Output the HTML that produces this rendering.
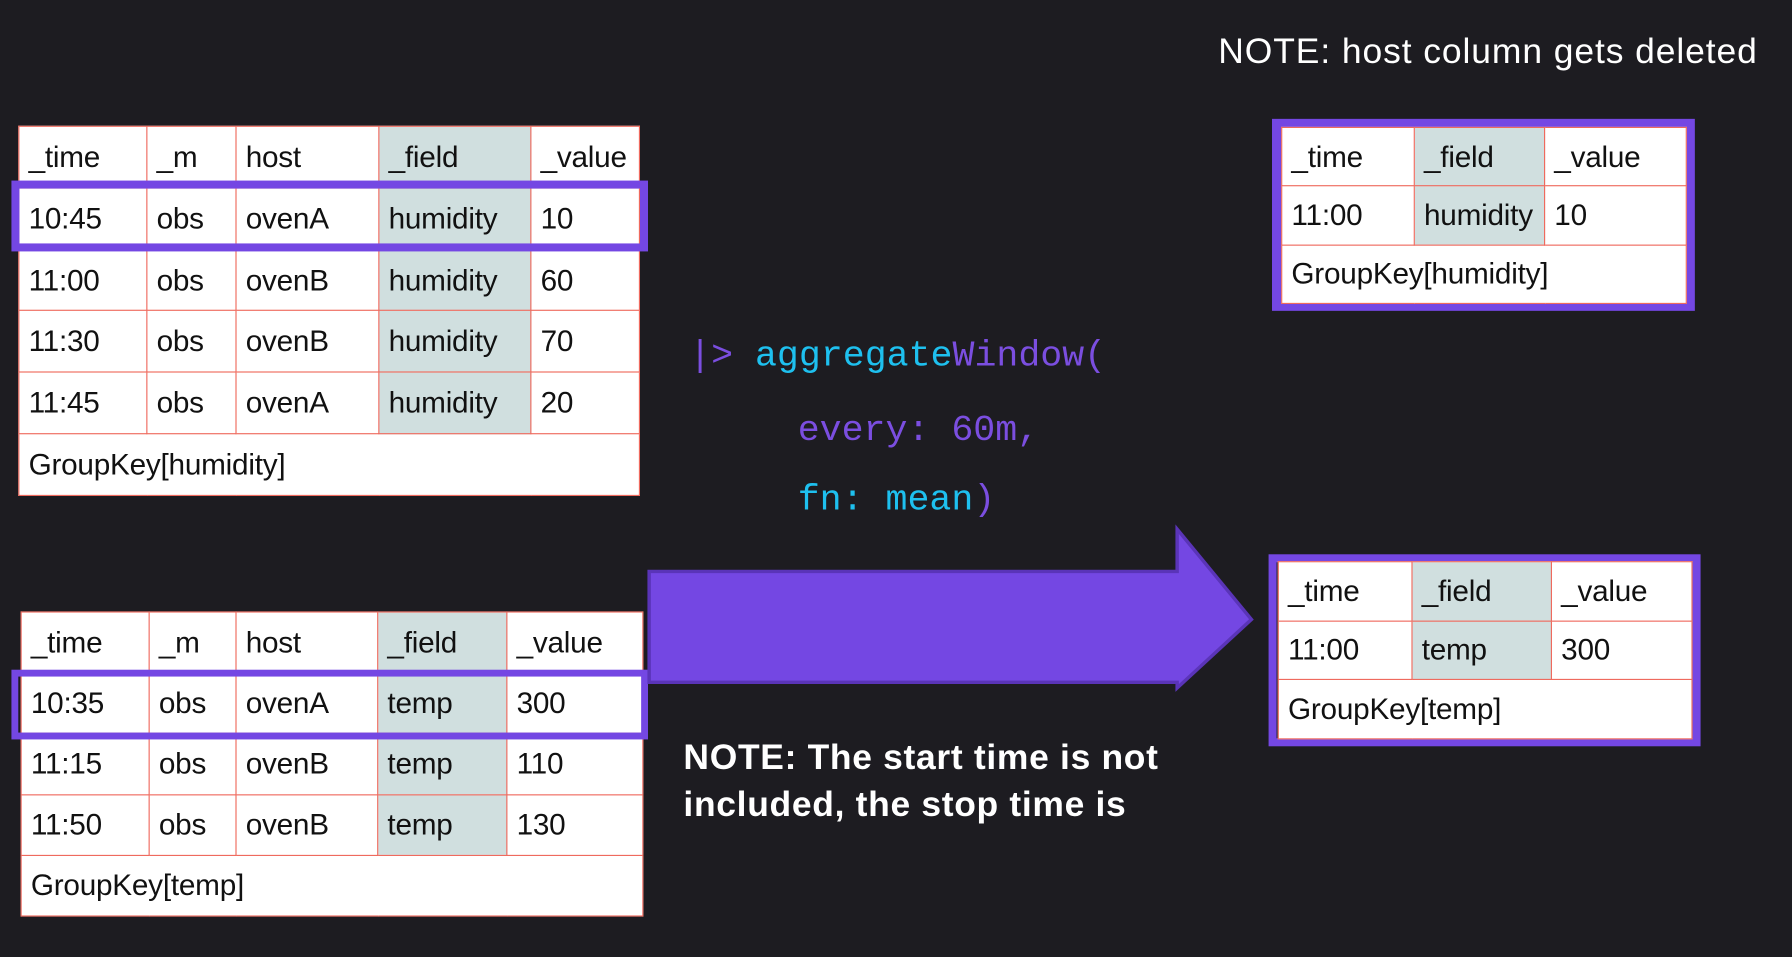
<!DOCTYPE html>
<html><head><meta charset="utf-8"><style>
html,body{margin:0;padding:0;background:#1d1c21;overflow:hidden;width:1792px;height:956px}
#s{position:absolute;left:0;top:0;width:1568px;height:837px;transform:scale(1.142857);transform-origin:0 0;font-family:"Liberation Sans",Arial,sans-serif}
.t{position:absolute;background:#fff;border-collapse:collapse}
.t td{border:1px solid #ef6a5e;padding:0 0 0 8px;font-size:26px;color:#111;vertical-align:middle;white-space:nowrap;letter-spacing:-0.2px}
.t td.f{background:#d0dfdf}
.hl{position:absolute;border:7px solid #7447e3;box-sizing:border-box}
.code{position:absolute;font-family:"Liberation Mono",monospace;font-size:32px;white-space:pre;line-height:36px}
.c{color:#1ec0ef}.p{color:#7b4ee0}
</style></head><body><div id="s">
<div style="position:absolute;left:1066px;top:27px;color:#fff;font-size:31px;letter-spacing:0.8px">NOTE: host column gets deleted</div>

<table class="t" style="left:16px;top:110px;width:544px;height:324px">
<colgroup><col style="width:112px"><col style="width:78px"><col style="width:125px"><col style="width:133px"><col></colgroup>
<tr><td>_time</td><td>_m</td><td>host</td><td class="f">_field</td><td>_value</td></tr>
<tr><td>10:45</td><td>obs</td><td>ovenA</td><td class="f">humidity</td><td>10</td></tr>
<tr><td>11:00</td><td>obs</td><td>ovenB</td><td class="f">humidity</td><td>60</td></tr>
<tr><td>11:30</td><td>obs</td><td>ovenB</td><td class="f">humidity</td><td>70</td></tr>
<tr><td>11:45</td><td>obs</td><td>ovenA</td><td class="f">humidity</td><td>20</td></tr>
<tr><td colspan="5">GroupKey[humidity]</td></tr>
</table>
<div class="hl" style="left:10px;top:158px;width:557px;height:62px"></div>

<table class="t" style="left:18px;top:535px;width:545px;height:267px">
<colgroup><col style="width:112px"><col style="width:76px"><col style="width:124px"><col style="width:113px"><col></colgroup>
<tr><td>_time</td><td>_m</td><td>host</td><td class="f">_field</td><td>_value</td></tr>
<tr><td>10:35</td><td>obs</td><td>ovenA</td><td class="f">temp</td><td>300</td></tr>
<tr><td>11:15</td><td>obs</td><td>ovenB</td><td class="f">temp</td><td>110</td></tr>
<tr><td>11:50</td><td>obs</td><td>ovenB</td><td class="f">temp</td><td>130</td></tr>
<tr><td colspan="5">GroupKey[temp]</td></tr>
</table>
<div class="hl" style="left:10px;top:586px;width:557px;height:61px;border-width:6px"></div>

<div class="code" style="left:603px;top:294px"><span class="p">|&gt;</span> <span class="c">aggregate</span><span class="p">Window(</span></div>
<div class="code p" style="left:698px;top:359px">every: 60m,</div>
<div class="code" style="left:698px;top:420px"><span class="c">fn: mean</span><span class="p">)</span></div>

<svg style="position:absolute;left:560px;top:455px" width="545" height="160">
<polygon points="8,45 470,45 470,8 535,87 470,147 470,142 8,142" fill="#7447e3" stroke="#5a34b8" stroke-width="3"/>
</svg>

<div style="position:absolute;left:598px;top:642px;color:#fff;font-weight:bold;font-size:31px;line-height:41px;letter-spacing:0.6px">NOTE: The start time is not<br>included, the stop time is</div>

<div class="hl" style="left:1113px;top:104px;width:370px;height:168px;border-width:8px"></div>
<table class="t" style="left:1121px;top:111px;width:355px;height:155px">
<colgroup><col style="width:116px"><col style="width:114px"><col></colgroup>
<tr><td>_time</td><td class="f">_field</td><td>_value</td></tr>
<tr><td>11:00</td><td class="f">humidity</td><td>10</td></tr>
<tr><td colspan="3">GroupKey[humidity]</td></tr>
</table>

<div class="hl" style="left:1110px;top:485px;width:378px;height:168px;border-width:7px"></div>
<table class="t" style="left:1118px;top:491px;width:363px;height:156px">
<colgroup><col style="width:117px"><col style="width:122px"><col></colgroup>
<tr><td>_time</td><td class="f">_field</td><td>_value</td></tr>
<tr><td>11:00</td><td class="f">temp</td><td>300</td></tr>
<tr><td colspan="3">GroupKey[temp]</td></tr>
</table>
</div></body></html>
